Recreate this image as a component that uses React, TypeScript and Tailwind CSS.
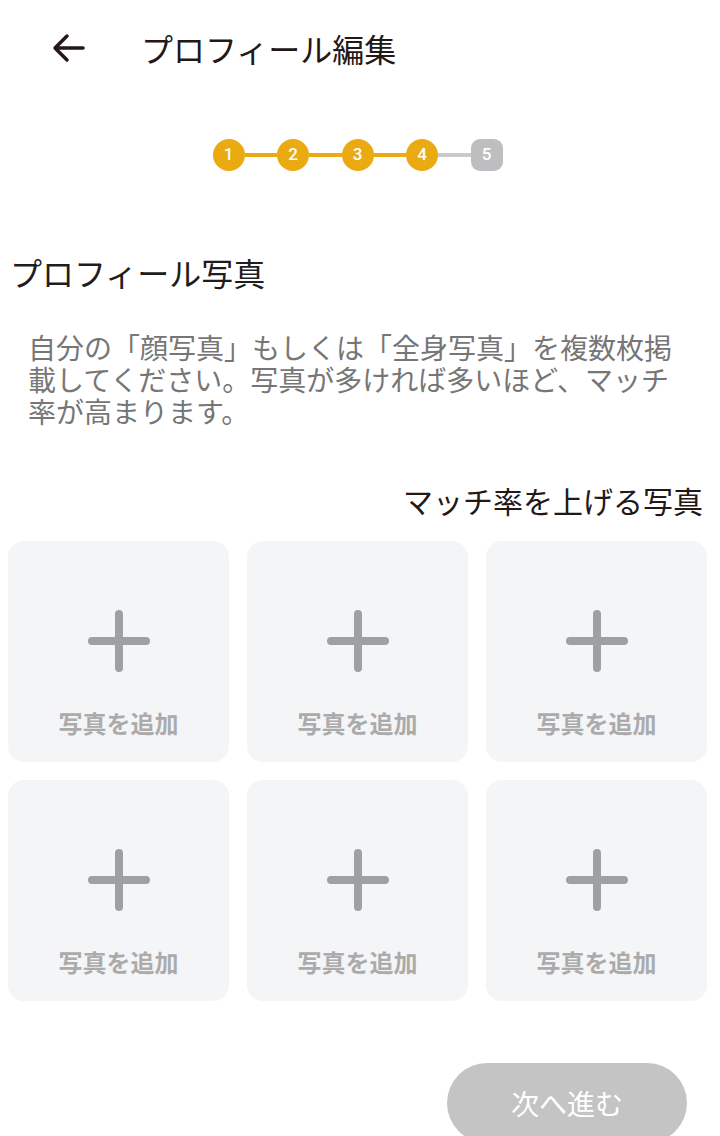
import React from "react";

const font = { fontFamily: '"Noto Sans CJK JP", "Noto Sans", sans-serif' };

function Plus() {
  return (
    <svg width="64" height="64" viewBox="0 0 64 64" fill="none">
      <path d="M32 5V59M5 32H59" stroke="#9FA0A3" strokeWidth="8" strokeLinecap="round" />
    </svg>
  );
}

function Card() {
  return (
    <div className="h-[221px] rounded-[16px] bg-[#F4F5F7] flex flex-col items-center pt-[68px]">
      <Plus />
      <div className="mt-[34px] h-[32px] leading-[32px] text-[24px] font-bold text-[#ABABAB]">写真を追加</div>
    </div>
  );
}

function Step({ n, active }: { n: number; active: boolean }) {
  return (
    <div
      className={
        "w-[32px] h-[32px] flex items-center justify-center text-white text-[17px] font-medium " +
        (active ? "rounded-full bg-[#EAAA12]" : "rounded-[9px] bg-[#BDBEC0]")
      }
      style={{ fontFamily: "Roboto, sans-serif" }}
    >
      {n}
    </div>
  );
}

function Line({ active }: { active: boolean }) {
  return <div className={"w-[32.5px] h-[4px] " + (active ? "bg-[#EAAA12]" : "bg-[#C9CACC]")} />;
}

export default function App() {
  return (
    <div className="w-[720px] h-[1136px] bg-white overflow-hidden" style={font}>
      <div className="h-[96px] flex items-center pl-[50px]">
        <svg width="36" height="36" viewBox="0 0 36 36" fill="none">
          <path d="M33 18H5M17 6L5 18L17 30" stroke="#231815" strokeWidth="3.5" strokeLinecap="round" strokeLinejoin="round" />
        </svg>
        <div className="ml-[55px] text-[32px] leading-[40px] text-[#231815]">プロフィール編集</div>
      </div>

      <div className="mt-[43px] h-[32px] flex items-center justify-center pr-[5px]">
        <Step n={1} active />
        <Line active />
        <Step n={2} active />
        <Line active />
        <Step n={3} active />
        <Line active />
        <Step n={4} active />
        <Line active={false} />
        <Step n={5} active={false} />
      </div>

      <div className="mt-[81px] pl-[10px] text-[32px] leading-[40px] text-[#1E1E1E]">プロフィール写真</div>

      <div className="mt-[39px] pl-[28px] w-[688px] text-[28px] leading-[32px] text-[#767676]">
        自分の「顔写真」もしくは「全身写真」を複数枚掲載してください。写真が多ければ多いほど、マッチ率が高まります。
      </div>

      <div className="mt-[53px] pr-[17px] text-right text-[30px] leading-[40px] text-[#231815]">マッチ率を上げる写真</div>

      <div className="mt-[21px] pl-[8px] pr-[13px] grid grid-cols-3 gap-x-[18px] gap-y-[18px]">
        <Card />
        <Card />
        <Card />
        <Card />
        <Card />
        <Card />
      </div>

      <div className="mt-[62px] flex justify-end pr-[33px]">
        <div className="w-[240px] h-[80px] rounded-full bg-[#C4C4C4] flex items-center justify-center text-white text-[28px]">
          次へ進む
        </div>
      </div>
    </div>
  );
}
